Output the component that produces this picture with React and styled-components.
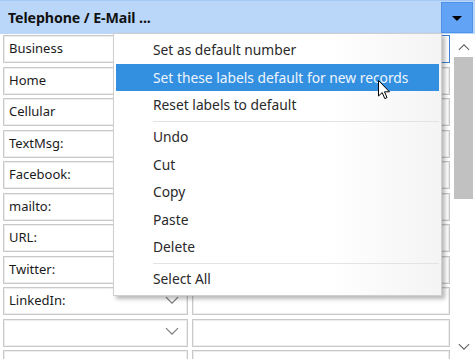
import React from "react";
import styled, { createGlobalStyle } from "styled-components";

const GlobalStyle = createGlobalStyle`
  html, body {
    margin: 0;
    padding: 0;
    background: #ffffff;
  }
  body {
    font-family: "Noto Sans", "Open Sans", sans-serif;
  }
`;

const Window = styled.div`
  position: relative;
  width: 475px;
  height: 359px;
  overflow: hidden;
  background: #ffffff;
  display: flex;
  flex-direction: column;
`;

const Header = styled.div`
  height: 34px;
  box-sizing: border-box;
  border-top: 1px solid #a4c8f2;
  background: #bad7f9;
  display: flex;
  align-items: center;
  justify-content: space-between;
  padding: 0 2px 0 8px;
`;

const Title = styled.span`
  font-size: 14.2px;
  font-weight: 700;
  color: #111111;
  letter-spacing: -0.1px;
`;

const DropButton = styled.div`
  width: 32px;
  height: 31px;
  box-sizing: border-box;
  background: #62a3f6;
  border: 1px solid #4f92ea;
  display: flex;
  align-items: center;
  justify-content: center;
`;

const Triangle = styled.div`
  width: 0;
  height: 0;
  border-left: 5px solid transparent;
  border-right: 5px solid transparent;
  border-top: 5px solid #000000;
  margin-top: 1px;
`;

const Body = styled.div`
  flex: 1;
  display: flex;
  min-height: 0;
`;

const Grid = styled.div`
  flex: 1;
  display: grid;
  grid-template-columns: 185px 258px;
  grid-auto-rows: 28px;
  column-gap: 4px;
  row-gap: 3.5px;
  padding: 1px 0 0 3px;
  overflow: hidden;
`;

const Cell = styled.div`
  box-sizing: border-box;
  border: 1px solid ${(p) => (p.$focused ? "#3a7fd8" : "#c9c9c9")};
  box-shadow: inset 0 0 0 1px ${(p) => (p.$focused ? "#ffffff" : "#ededed")};
  display: flex;
  align-items: center;
  justify-content: space-between;
  padding: 0 8px 2px 5px;
  font-size: 13px;
  color: #1b1b1b;
  background: #ffffff;
`;

const Chevron = ({ size = 14, color = "#7a7a7a" }) => (
  <svg width={size} height={size * 0.6} viewBox="0 0 14 8">
    <path d="M1 1 L7 7 L13 1" fill="none" stroke={color} strokeWidth="1.2" />
  </svg>
);

const Scrollbar = styled.div`
  width: 22px;
  display: flex;
  flex-direction: column;
  align-items: center;
  padding: 7px 1px 6px 0;
  box-sizing: border-box;
`;

const Arrow = styled.div`
  height: 12px;
  display: flex;
  align-items: center;
  justify-content: center;
  transform: ${(p) => (p.$up ? "rotate(180deg)" : "none")};
`;

const Thumb = styled.div`
  width: 19px;
  height: 142px;
  margin-top: 4px;
  background: #c1c1c1;
`;

const Spacer = styled.div`
  flex: 1;
`;

const Menu = styled.div`
  position: absolute;
  left: 113px;
  top: 33px;
  width: 329px;
  box-sizing: border-box;
  border: 1px solid #cfcfcf;
  background: linear-gradient(to right, #ffffff 65%, #f4f4f4);
  box-shadow: 3px 3px 4px rgba(0, 0, 0, 0.28);
  padding: 2px;
  display: flex;
  flex-direction: column;
`;

const Item = styled.div`
  height: 27.5px;
  display: flex;
  align-items: center;
  padding-left: 37px;
  font-size: 13.8px;
  color: ${(p) => (p.$active ? "#eef5fd" : "#2a2a2a")};
  background: ${(p) => (p.$active ? "#3390e1" : "transparent")};
`;

const Separator = styled.div`
  height: 1px;
  background: #e3e3e3;
  margin: 2px 0 1.5px 37px;
`;

const Cursor = styled.svg`
  position: absolute;
  left: 378px;
  top: 80px;
`;

const rows = [
  "Business",
  "Home",
  "Cellular",
  "TextMsg:",
  "Facebook:",
  "mailto:",
  "URL:",
  "Twitter:",
  "LinkedIn:",
  "",
  "",
];

const menuItems = [
  { label: "Set as default number" },
  { label: "Set these labels default for new records", active: true },
  { label: "Reset labels to default" },
  { sep: true },
  { label: "Undo" },
  { label: "Cut" },
  { label: "Copy" },
  { label: "Paste" },
  { label: "Delete" },
  { sep: true },
  { label: "Select All" },
];

const App = () => {
  return (
    <Window>
      <GlobalStyle />
      <Header>
        <Title>Telephone / E-Mail ...</Title>
        <DropButton>
          <Triangle />
        </DropButton>
      </Header>
      <Body>
        <Grid>
          {rows.map((label, i) => (
            <React.Fragment key={i}>
              <Cell>
                <span>{label}</span>
                <Chevron />
              </Cell>
              <Cell $focused={i === 0} />
            </React.Fragment>
          ))}
        </Grid>
        <Scrollbar>
          <Arrow $up>
            <Chevron size={12} color="#606060" />
          </Arrow>
          <Thumb />
          <Spacer />
          <Arrow>
            <Chevron size={12} color="#606060" />
          </Arrow>
        </Scrollbar>
      </Body>
      <Menu>
        {menuItems.map((m, i) =>
          m.sep ? (
            <Separator key={i} />
          ) : (
            <Item key={i} $active={m.active}>
              {m.label}
            </Item>
          )
        )}
      </Menu>
      <Cursor width="13" height="20" viewBox="0 0 13 20">
        <path
          d="M0.5 0.5 L0.5 16 L4.2 12.6 L6.8 18.6 L9 17.6 L6.5 11.8 L11.5 11.8 Z"
          fill="#ffffff"
          stroke="#000000"
          strokeWidth="1"
        />
      </Cursor>
    </Window>
  );
};

export default App;
